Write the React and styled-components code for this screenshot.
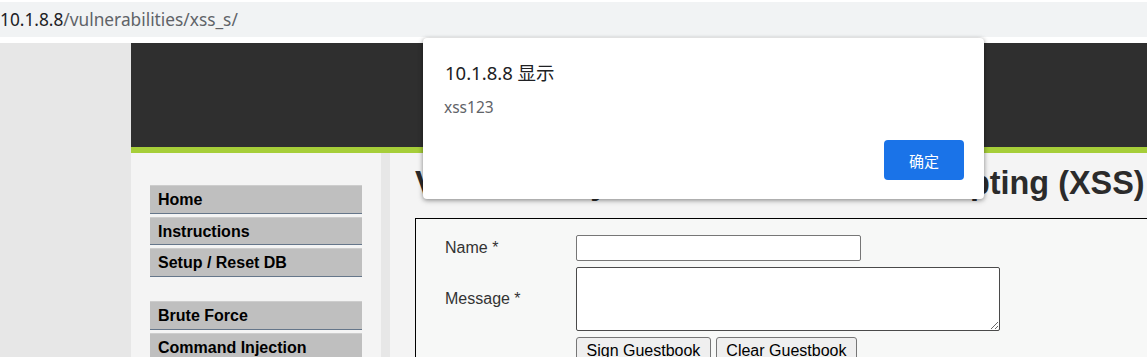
import React from 'react';
import styled, {createGlobalStyle} from 'styled-components';

const GlobalStyle = createGlobalStyle`
  html, body {
    margin: 0;
    padding: 0;
    background: #ffffff;
    overflow: hidden;
  }
  body {
    font-family: "Liberation Sans", Arial, sans-serif;
  }
`

const Screen = styled.div`
  position: relative;
  width: 1147px;
  height: 357px;
  overflow: hidden;
  background: #ffffff;
`

const AddressBar = styled.div`
  display: flex;
  align-items: center;
  height: 35px;
  margin-top: 2px;
  margin-bottom: 6px;
  background: #f1f3f4;
  font-family: "Noto Sans", "Open Sans", sans-serif;
  font-size: 17.3px;
`

const Host = styled.span`
  color: #202124;
`

const UrlPath = styled.span`
  color: #5f6368;
`

const Page = styled.div`
  display: grid;
  grid-template-columns: 131px 1fr;
  height: 314px;
  background: #e7e7e7;
`

const Container = styled.div`
  display: flex;
  flex-direction: column;
  min-width: 1100px;
`

const Header = styled.div`
  height: 104px;
  background: #2f2f2f;
  border-bottom: 6px solid #a6ce39;
`

const Body = styled.div`
  display: grid;
  grid-template-columns: 250px 9px 1fr;
  flex: 1;
`

const Sidebar = styled.div`
  background: #f4f4f4;
  padding: 32px 0 0 19px;
`

const MenuGroup = styled.ul`
  list-style: none;
  margin: 0 0 24.5px 0;
  padding: 0;
  width: 212px;
`

const MenuItem = styled.li`
  height: 26.5px;
  margin-bottom: 3px;
  padding-left: 8px;
  background: #bfbfbf;
  border-top: 1px solid #cdcdcd;
  border-bottom: 1px solid #65768a;
  font-size: 16px;
  font-weight: bold;
  line-height: 27px;
  color: #000000;
`

const Gutter = styled.div`
  background: #e7e7e7;
`

const Main = styled.div`
  background: #f4f4f4;
  padding: 12px 0 0 25px;
`

const Title = styled.h1`
  margin: 0 0 16px 0;
  font-size: 32.4px;
  line-height: 37px;
  font-weight: bold;
  color: #2b2b2b;
  white-space: nowrap;
`

const FormBox = styled.div`
  border: 1px solid #000000;
  background: #f7f8f7;
  padding: 16px 0 0 29px;
  height: 200px;
`

const FormRow = styled.div`
  display: grid;
  grid-template-columns: 131px auto;
  align-items: center;
  margin-bottom: 6px;
`

const Label = styled.span`
  font-size: 16px;
  color: #333333;
`

const TextInput = styled.input`
  box-sizing: border-box;
  width: 285px;
  height: 26px;
  margin: 0;
  border: 1px solid #767676;
  border-radius: 2px;
  background: #ffffff;
`

const TextArea = styled.textarea`
  box-sizing: border-box;
  width: 424px;
  height: 64px;
  margin: 0;
  border: 1px solid #4a4a4a;
  border-radius: 2px;
  background: #ffffff;
  display: block;
`

const Buttons = styled.div`
  display: flex;
  gap: 5px;
  grid-column: 2;
`

const FormButton = styled.button`
  height: 28px;
  padding: 1px 9.5px;
  font-family: "Liberation Sans", Arial, sans-serif;
  font-size: 16px;
  color: #000000;
  background: #efefef;
  border: 1px solid #767676;
  border-radius: 3px;
`

const Dialog = styled.div`
  position: absolute;
  left: 423px;
  top: 38px;
  width: 561px;
  height: 161px;
  box-sizing: border-box;
  padding: 22px 20px 19px 22px;
  display: flex;
  flex-direction: column;
  background: #ffffff;
  border-radius: 4px;
  box-shadow: 0 1px 4px rgba(0, 0, 0, 0.35), 0 2px 6px rgba(0, 0, 0, 0.15);
  font-family: "Noto Sans", "Noto Sans CJK SC", sans-serif;
`

const DialogTitle = styled.div`
  font-size: 18.5px;
  line-height: 25px;
  color: #202124;
`

const DialogMessage = styled.div`
  margin-top: 11px;
  margin-left: -1px;
  font-size: 15.5px;
  color: #5f6368;
`

const DialogActions = styled.div`
  margin-top: auto;
  display: flex;
  justify-content: flex-end;
`

const OkButton = styled.button`
  width: 80px;
  height: 40px;
  border: none;
  border-radius: 4px;
  background: #1a73e8;
  color: #ffffff;
  font-family: "Noto Sans CJK SC", sans-serif;
  font-size: 15px;
`

const menu = [
  ['Home', 'Instructions', 'Setup / Reset DB'],
  ['Brute Force', 'Command Injection', 'CSRF', 'File Inclusion'],
]

function App() {
  return (
    <Screen>
      <GlobalStyle />
      <AddressBar>
        <Host>10.1.8.8</Host>
        <UrlPath>/vulnerabilities/xss_s/</UrlPath>
      </AddressBar>

      <Page>
        <div />
        <Container>
          <Header />
          <Body>
            <Sidebar>
              {menu.map((group, i) => (
                <MenuGroup key={i}>
                  {group.map(item => <MenuItem key={item}>{item}</MenuItem>)}
                </MenuGroup>
              ))}
            </Sidebar>
            <Gutter />
            <Main>
              <Title>Vulnerability: Stored Cross Site Scripting (XSS)</Title>
              <FormBox>
                <FormRow>
                  <Label>Name *</Label>
                  <TextInput type="text" />
                </FormRow>
                <FormRow>
                  <Label>Message *</Label>
                  <TextArea />
                </FormRow>
                <FormRow>
                  <Buttons>
                    <FormButton>Sign Guestbook</FormButton>
                    <FormButton>Clear Guestbook</FormButton>
                  </Buttons>
                </FormRow>
              </FormBox>
            </Main>
          </Body>
        </Container>
      </Page>

      {/* alert() */}
      <Dialog>
        <DialogTitle>10.1.8.8 显示</DialogTitle>
        <DialogMessage>xss123</DialogMessage>
        <DialogActions>
          <OkButton>确定</OkButton>
        </DialogActions>
      </Dialog>
    </Screen>
  )
}

export default App;
